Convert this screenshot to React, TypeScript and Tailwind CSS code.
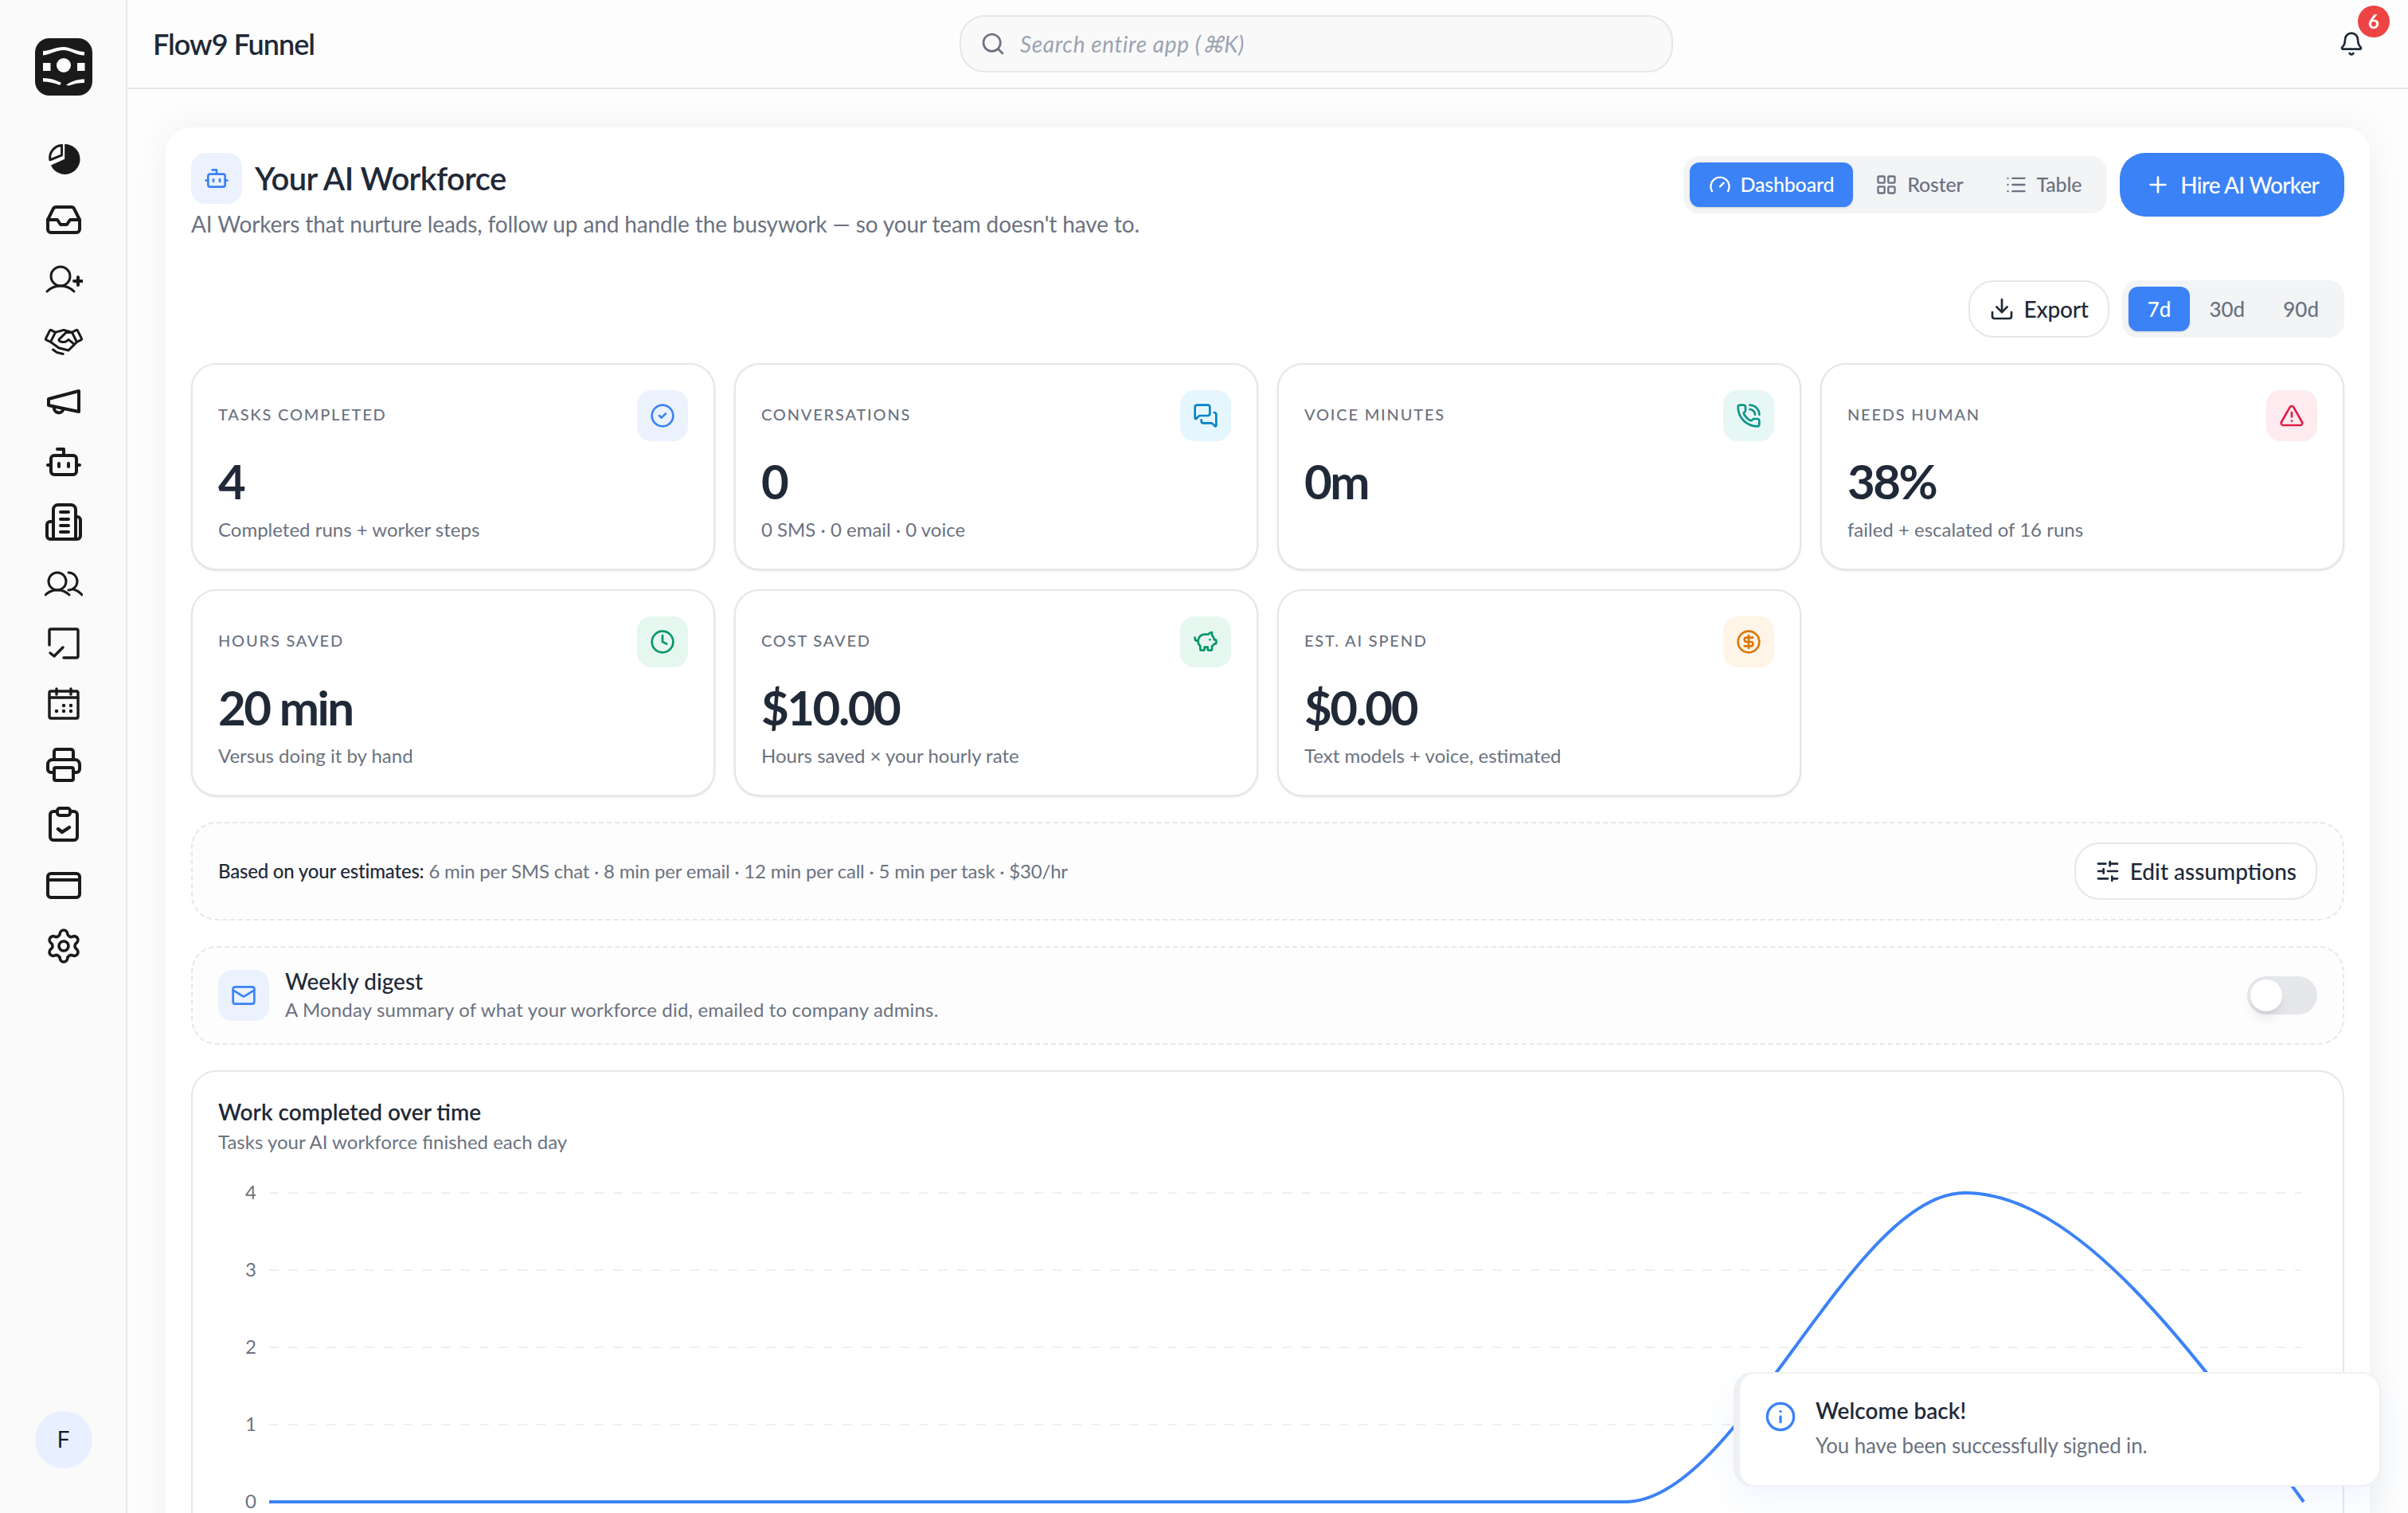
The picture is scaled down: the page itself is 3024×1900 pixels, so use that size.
import { Bell, Bot, CircleCheck, CircleDollarSign, Clock, Download, Gauge, Inbox, Info, LayoutGrid, List, Mail, MessagesSquare, PhoneCall, PiggyBank, Plus, Search, Settings, SlidersHorizontal, TriangleAlert } from 'lucide-react'
import { PiHandshake } from 'react-icons/pi'
import type { ReactNode } from 'react'

function Glyph({ children }: { children: ReactNode }) {
  return (
    <svg viewBox="0 0 24 24" className="h-12 w-12" fill="none" stroke="currentColor" strokeWidth="2" strokeLinecap="round" strokeLinejoin="round">
      {children}
    </svg>
  )
}

function Logo() {
  return (
    <svg viewBox="0 0 72 72" className="h-[72px] w-[72px] shrink-0">
      <rect width="72" height="72" rx="18" fill="#1a1a1a" />
      <g fill="#fff">
        <path d="M10 16C18 16 26 11 36 11C44 11 52 17 62 17V21.5C52 21.5 44 15 36 15C26 15 18 21 10 21.5Z" />
        <circle cx="36" cy="34" r="9" />
        <rect x="10" y="31" width="9.5" height="10" />
        <rect x="53" y="31" width="9.5" height="10" />
        <path d="M10 50c8 0 16 2 23 6l-2 3c-7-3-14-4.5-21-4.5z" />
        <path d="M62 51.5v4.5c-7 0-13 1-19 3.5l-4-.5c6-5 14-7.5 23-7.5z" />
      </g>
    </svg>
  )
}

function NavIcons() {
  return (
    <nav className="mt-14 flex flex-col items-center gap-7 text-[#1a1a1a]">
      <Glyph>
        <path d="M12.6 2.5a9.5 9.5 0 1 1-8.6 13.2l8.6-3.8z" fill="currentColor" stroke="none" />
        <path d="M10.8 3.2v6.2L3.4 12.4A8 8 0 0 1 10.8 3.2z" strokeWidth="1.5" />
      </Glyph>
      <Inbox size={48} strokeWidth={2} />
      <Glyph>
        <g strokeWidth="1.5">
          <circle cx="10" cy="9.5" r="6" />
          <path d="M1.5 19C4 16.5 7 15.5 10 15.5S16 16.5 18.5 19" />
          <path d="M18.5 12.5h5M21 10v5" strokeWidth="2" />
        </g>
      </Glyph>
      <PiHandshake size={48} />
      <Glyph>
        <path d="M21.5 5.5v13l-19-4v-4z" />
        <path d="M6 15.5a3 3 0 0 0 5.8 1.5" />
      </Glyph>
      <Bot size={48} strokeWidth={2} />
      <Glyph>
        <path d="M5.5 22.5V4a3 3 0 0 1 3-3h8a3 3 0 0 1 3 3v18.5z" />
        <path d="M5.5 11.5h-2a2 2 0 0 0-2 2v7a2 2 0 0 0 2 2h17a2 2 0 0 0 2-2v-10a2 2 0 0 0-2-2h-1" />
        <path d="M10 5.5h5M10 10h5M10 14h5M10 18h5" />
      </Glyph>
      <Glyph>
        <g strokeWidth="1.5">
          <circle cx="8" cy="11" r="5.5" />
          <path d="M.5 19.5C2.5 17.5 5 16.5 8 16.5S13.5 17.5 15.5 19.5" />
          <path d="M15 5.5a5.5 5.5 0 0 1 0 11" />
          <path d="M18 16c2.2.6 4 1.8 5.5 3.5" />
        </g>
      </Glyph>
      <Glyph>
        <g strokeWidth="1.7">
          <path d="M3 13V4a1 1 0 0 1 1-1h16a1 1 0 0 1 1 1v16a1 1 0 0 1-1 1h-8" />
          <path d="M3.5 18L6 20l5.5-5.5" />
        </g>
      </Glyph>
      <Glyph>
        <g strokeWidth="1.7">
          <rect x="3" y="4" width="18" height="17" rx="1" />
          <path d="M3 8h18M7.5 2.5V6M16.5 2.5V6" />
          <path d="M12 13h.01M16.5 13h.01M7.5 16.5h.01M12 16.5h.01M16.5 16.5h.01" strokeWidth="2.2" />
        </g>
      </Glyph>
      <Glyph>
        <path d="M6 9V4a1.5 1.5 0 0 1 1.5-1.5h9A1.5 1.5 0 0 1 18 4v5" />
        <path d="M6 17H4a2 2 0 0 1-2-2v-3a3 3 0 0 1 3-3h14a3 3 0 0 1 3 3v3a2 2 0 0 1-2 2h-2" />
        <rect x="6" y="14" width="12" height="8" rx="1" />
      </Glyph>
      <Glyph>
        <rect x="3.5" y="3.5" width="17" height="18" rx="2" />
        <rect x="8" y="1.5" width="8" height="4.5" rx="1.5" fill="#fafafa" />
        <path d="M8.5 14.5l2.5 2 4.5-3" strokeWidth="2.2" />
      </Glyph>
      <Glyph>
        <rect x="2" y="4.5" width="20" height="15" rx="2" />
        <path d="M2 8.5h20" />
      </Glyph>
      <Settings size={48} strokeWidth={1.8} />
    </nav>
  )
}

function Sidebar() {
  return (
    <aside className="flex h-full w-[160px] shrink-0 flex-col items-center border-r-2 border-[#e5e7eb] bg-[#fafafa] pt-12 pb-14 pl-[2px]">
      <Logo />
      <NavIcons />
      <div className="mt-auto flex h-[72px] w-[72px] items-center justify-center rounded-full bg-[#e8effe] font-[Inter,sans-serif] text-[28px] text-[#1a1a1a]">F</div>
    </aside>
  )
}

function Header() {
  return (
    <header className="flex h-[112px] shrink-0 items-center border-b-2 border-[#e5e7eb] bg-[#fdfdfd] pl-8 pr-6">
      <div className="w-[1013px] shrink-0 text-[36px] font-semibold tracking-[-1px] text-[#1f2937]">Flow9 Funnel</div>
      <div className="flex h-[72px] w-[896px] items-center gap-[18px] rounded-[32px] border-2 border-[#e5e7eb] bg-[#f9f9fa] pl-[24px]">
        <Search size={32} className="text-[#6b7280]" />
        <span className="text-[28px] tracking-[0.6px] italic text-[#9ca3af]">Search entire app (⌘K)</span>
      </div>
      <div className="relative ml-auto mr-[31px] flex">
        <Bell size={32} className="text-[#1f2937]" />
        <span className="absolute -top-[32px] left-[24px] flex h-10 w-10 items-center justify-center rounded-full bg-[#ef4444] text-[24px] font-bold text-white">6</span>
      </div>
    </header>
  )
}

function StatCard({ label, value, sub, tile, children }: { label: string; value: string; sub?: string; tile: string; children: ReactNode }) {
  return (
    <div className="flex h-[260px] flex-col rounded-[32px] border-2 border-[#e5e7eb] bg-white p-8 shadow-sm">
      <div className="flex items-start justify-between">
        <span className="mt-[15px] text-[20px] font-medium uppercase tracking-[1.8px] text-[#6b7280]">{label}</span>
        <span className={`flex h-16 w-16 items-center justify-center rounded-[18px] ${tile}`}>{children}</span>
      </div>
      <div className="mt-[14px] text-[60px] leading-[72px] font-bold tracking-[-2.5px] text-[#1f2937]">{value}</div>
      {sub && <div className="mt-[9px] text-[24px] leading-8 text-[#6b7280]">{sub}</div>}
    </div>
  )
}

function Chart() {
  const rows = [4, 3, 2, 1, 0]
  return (
    <svg viewBox="0 0 2640 420" className="mt-[26px] block h-[420px] w-[2640px] overflow-visible">
      {rows.map((n, i) => (
        <g key={n}>
          <text x="48" y={20 + i * 97 + 8} textAnchor="end" fontSize="24" fill="#6b7280">{n}</text>
          {i < 4 && <line x1="64" x2="2616" y1={20 + i * 97} y2={20 + i * 97} stroke="#eeeff1" strokeWidth="2" strokeDasharray="12 12" />}
        </g>
      ))}
      <path d="M64 408H1767C1909 408 2051 20 2193 20C2335 20 2477 214 2619 408" fill="none" stroke="#3b82f6" strokeWidth="4" />
    </svg>
  )
}

export default function App() {
  return (
    <div className="relative flex h-screen w-screen overflow-hidden bg-[#fdfdfd] font-[Lato,sans-serif]">
      <Sidebar />
      <div className="flex min-w-0 flex-1 flex-col">
        <Header />
        <main className="flex-1 overflow-hidden px-12 pt-12">
          <div className="min-h-[1800px] rounded-[32px] bg-white p-8 shadow-[0_0_48px_rgba(0,0,0,0.06)]">
            <div className="flex items-start justify-between">
              <div>
                <div className="flex items-center gap-4">
                  <span className="flex h-16 w-16 items-center justify-center rounded-[18px] bg-[#ebf2fe] text-[#3b82f6]"><Bot size={32} /></span>
                  <h1 className="text-[40px] font-semibold tracking-[-0.6px] text-[#1f2937]">Your AI Workforce</h1>
                </div>
                <p className="mt-[5px] text-[28px] leading-10 tracking-[-0.13px] text-[#6b7280]">AI Workers that nurture leads, follow up and handle the busywork — so your team doesn't have to.</p>
              </div>
              <div className="flex items-center gap-4">
                <div className="flex h-[72px] items-center gap-1 rounded-[20px] bg-[#f3f4f6] p-2 text-[25px] font-medium tracking-[-0.2px] text-[#6b7280]">
                  <button className="flex h-14 items-center gap-3 rounded-xl bg-[#3b82f6] px-6 text-white shadow-sm"><Gauge size={28} />Dashboard</button>
                  <button className="flex h-14 items-center gap-3 rounded-xl px-6"><LayoutGrid size={28} />Roster</button>
                  <button className="flex h-14 items-center gap-3 rounded-xl px-6"><List size={28} />Table</button>
                </div>
                <button className="flex h-20 items-center gap-3 rounded-[32px] bg-[#3b82f6] px-8 text-[28px] font-medium tracking-[-0.8px] text-white"><Plus size={32} />Hire AI Worker</button>
              </div>
            </div>

            <div className="mt-[51px] flex items-center justify-end gap-4">
              <button className="flex h-[72px] items-center gap-3 rounded-[32px] border-2 border-[#e5e7eb] bg-white px-6 text-[28px] font-medium tracking-[-0.2px] text-[#1f2937]"><Download size={32} />Export</button>
              <div className="flex h-[72px] items-center rounded-[20px] bg-[#f3f4f6] p-2 text-[26px] font-medium text-[#6b7280]">
                <button className="flex h-14 items-center rounded-xl bg-[#3b82f6] px-6 text-white shadow-sm">7d</button>
                <button className="flex h-14 items-center rounded-xl px-6">30d</button>
                <button className="flex h-14 items-center rounded-xl px-6">90d</button>
              </div>
            </div>

            <div className="mt-8 grid grid-cols-4 gap-6">
              <StatCard label="Tasks completed" value="4" sub="Completed runs + worker steps" tile="bg-[#ebf2fe] text-[#3b82f6]"><CircleCheck size={32} /></StatCard>
              <StatCard label="Conversations" value="0" sub="0 SMS · 0 email · 0 voice" tile="bg-[#e6f6fe] text-[#0284c7]"><MessagesSquare size={32} /></StatCard>
              <StatCard label="Voice minutes" value="0m" tile="bg-[#e7f7f5] text-[#0d9488]"><PhoneCall size={32} /></StatCard>
              <StatCard label="Needs human" value="38%" sub="failed + escalated of 16 runs" tile="bg-[#fdebef] text-[#e11d48]"><TriangleAlert size={32} /></StatCard>
              <StatCard label="Hours saved" value="20 min" sub="Versus doing it by hand" tile="bg-[#e6f7f0] text-[#059669]"><Clock size={32} /></StatCard>
              <StatCard label="Cost saved" value="$10.00" sub="Hours saved × your hourly rate" tile="bg-[#e6f7f0] text-[#059669]"><PiggyBank size={32} /></StatCard>
              <StatCard label="Est. AI spend" value="$0.00" sub="Text models + voice, estimated" tile="bg-[#fef4e7] text-[#d97706]"><CircleDollarSign size={32} /></StatCard>
            </div>

            <div className="mt-8 flex h-[124px] items-center justify-between rounded-[32px] border-2 border-dashed border-[#e5e7eb] bg-[#fdfdfd] px-8">
              <p className="text-[24px] tracking-[-0.2px] text-[#6b7280]"><span className="font-medium text-[#1f2937]">Based on your estimates:</span> 6 min per SMS chat · 8 min per email · 12 min per call · 5 min per task · $30/hr</p>
              <button className="flex h-[72px] items-center gap-3 rounded-[32px] border-2 border-[#e5e7eb] bg-white px-6 text-[28px] font-medium text-[#1f2937]"><SlidersHorizontal size={32} />Edit assumptions</button>
            </div>

            <div className="mt-8 flex h-[124px] items-center justify-between rounded-[32px] border-2 border-dashed border-[#e5e7eb] bg-[#fdfdfd] px-8">
              <div className="flex items-center gap-[20px]">
                <span className="flex h-16 w-16 items-center justify-center rounded-[18px] bg-[#ebf2fe] text-[#3b82f6]"><Mail size={32} /></span>
                <div>
                  <div className="text-[28px] leading-[36px] font-medium text-[#1f2937]">Weekly digest</div>
                  <div className="text-[24px] leading-[36px] tracking-[0.17px] text-[#6b7280]">A Monday summary of what your workforce did, emailed to company admins.</div>
                </div>
              </div>
              <div className="flex h-12 w-[88px] items-center rounded-full bg-[#e5e7eb] p-1">
                <span className="h-10 w-10 rounded-full bg-white shadow-lg" />
              </div>
            </div>

            <div className="mt-8 rounded-[32px] border-2 border-[#e5e7eb] bg-white p-8">
              <div className="text-[28px] leading-[36px] font-semibold text-[#1f2937]">Work completed over time</div>
              <div className="mt-[2px] text-[24px] leading-[36px] text-[#6b7280]">Tasks your AI workforce finished each day</div>
              <Chart />
            </div>
          </div>
        </main>
      </div>

      <div className="absolute right-[34px] bottom-[33px] flex h-[144px] w-[813px] items-start gap-[24px] rounded-[24px] border-2 border-l-8 border-[#eff0f2] bg-white pl-[31px] pt-[28px] shadow-[0_16px_40px_rgba(59,130,246,0.08)]">
        <Info size={40} className="mt-[6px] text-[#3b82f6]" />
        <div>
          <div className="text-[28px] leading-[36px] font-semibold text-[#1f2937]">Welcome back!</div>
          <div className="mt-[8px] text-[26px] leading-[36px] tracking-[-0.15px] text-[#6b7280]">You have been successfully signed in.</div>
        </div>
      </div>
    </div>
  )
}
